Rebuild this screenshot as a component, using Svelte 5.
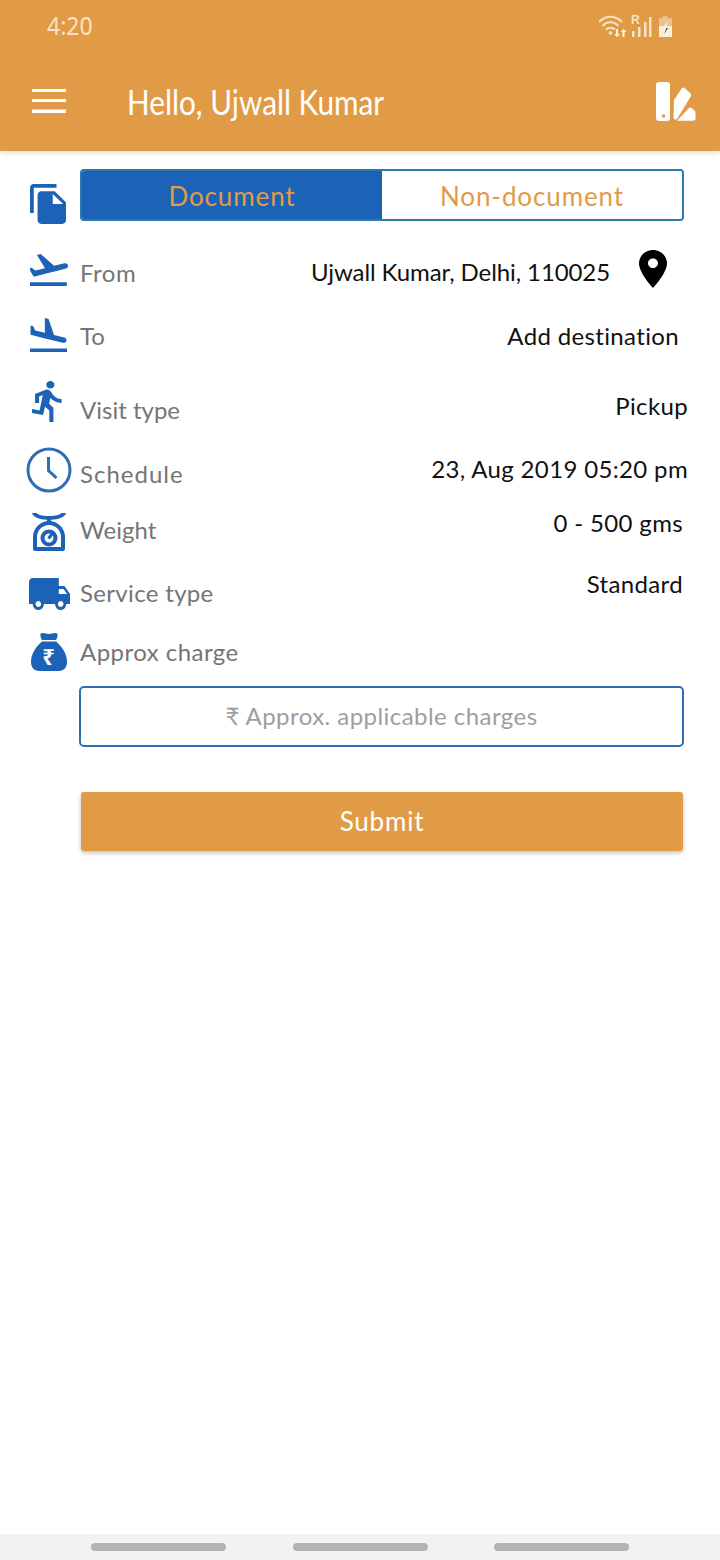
<script>
  const rows = [
    { key: 'from', label: 'From', value: 'Ujwall Kumar, Delhi, 110025' },
    { key: 'to', label: 'To', value: 'Add destination' },
    { key: 'visit', label: 'Visit type', value: 'Pickup' },
    { key: 'schedule', label: 'Schedule', value: '23, Aug 2019 05:20 pm' },
    { key: 'weight', label: 'Weight', value: '0 - 500 gms' },
    { key: 'service', label: 'Service type', value: 'Standard' },
    { key: 'charge', label: 'Approx charge', value: '' }
  ];
</script>

<div class="page">
  <header class="appbar">
    <div class="status">
      <span class="time">4:20</span>
      <svg class="sys" width="78" height="26" viewBox="0 0 78 26">
        <g fill="none" stroke="#f8e3c6" stroke-width="2">
          <path d="M1 8 C8 1 17 1 24 8" />
          <path d="M4.500 12 C9 7 16 7 20.500 12" />
          <path d="M8 15.500 C10.500 13 14.500 13 17 15.500" />
        </g>
        <circle cx="12.500" cy="19" r="1.800" fill="#f8e3c6" />
        <path d="M18 15h2v5h2l-3 3-3-3h2zM24.500 23v-5h-2l3-3 3 3h-2v5z" fill="#fdf3e3" />
        <text x="33" y="9.500" class="r">R</text>
        <path d="M34 17h2.500v6H34zM40 13h2.500v10H40zM46 8h2.500v15H46zM51 3h2.500v20H51z" fill="#f8e3c6" />
        <path d="M64.500 2h5v2h4.500v19H61V4h3.500z" fill="#ecc28c" />
        <path d="M61 12h13v11H61z" fill="#fbeeda" />
        <path d="M69.500 7l-4.500 6h2.500l-1.500 3h3l1.500-4h-2z" fill="#fbeeda" />
        <path d="M68.500 14l-2.500 6 4-6z" fill="#333" />
      </svg>
    </div>
    <div class="toolbar">
      <svg class="menu" width="34" height="24" viewBox="0 0 34 24">
        <path d="M0 0h34v3H0zM0 10h34v3H0zM0 20.500h34v3.500H0z" fill="#fff" />
      </svg>
      <h1>Hello, Ujwall Kumar</h1>
      <svg class="swatch" width="40" height="40" viewBox="0 0 40 40">
        <rect x="0" y="0" width="14" height="39" rx="3" fill="#fff" />
        <circle cx="7.500" cy="34" r="1.800" fill="#e19b47" />
        <path d="M17.500 36 L18 18 L26 6 Q27.300 5 28.500 6 L34.500 11.500 Q35.600 12.500 35 14 L21 37 Q18 38.500 17.500 36 Z" fill="#fff" />
        <path d="M21 38.700 L33 26 Q34 25 35.500 26 L38.500 28.500 Q39.500 29.500 39.500 31 L39.500 36 Q39.500 38.700 37 38.700 Z" fill="#fff" />
      </svg>
    </div>
  </header>

  <main class="form">
    <div class="typerow">
      <svg class="ico" width="36" height="40" viewBox="2 1 19 22" preserveAspectRatio="none">
        <path d="M16 1H4c-1.100 0-2 .9-2 2v14h2V3h12V1zm-1 4l6 6v10c0 1.100-.9 2-2 2H7.990C6.890 23 6 22.100 6 21l.01-14c0-1.100.89-2 1.990-2h7zm-1 7h5.500L14 6.500V12z" />
      </svg>
      <div class="toggle">
        <span class="seg on">Document</span>
        <span class="seg">Non-document</span>
      </div>
    </div>

    {#each rows as row}
      <div class="row {row.key}">
        <div class="iconcell">
          {#if row.key === 'from'}
            <svg width="38" height="33" viewBox="2.500 3 19.600 18" preserveAspectRatio="none"><path d="M2.500 19h19v2h-19zm19.570-9.360c-.21-.8-1.040-1.280-1.840-1.060L14.920 10l-6.900-6.430-1.930.51 4.140 7.170-4.970 1.330-1.970-1.540-1.450.39 1.820 3.160.77 1.330 1.600-.43 5.310-1.420 4.350-1.160L21 11.490c.81-.23 1.280-1.050 1.070-1.850z" /></svg>
          {:else if row.key === 'to'}
            <svg width="37" height="34" viewBox="2.500 2 19 19" preserveAspectRatio="none"><path d="M2.500 19h19v2h-19zm7.180-5.730l4.350 1.160 5.310 1.420c.8.21 1.620-.26 1.840-1.060.21-.8-.26-1.620-1.060-1.840l-5.310-1.420-2.760-9.020L10.120 2v8.280L5.150 8.950l-.93-2.320-1.450-.39v5.170l1.600.43 5.310 1.430z" /></svg>
          {:else if row.key === 'visit'}
            <svg width="30" height="41" viewBox="4.500 1.500 14.700 21.500" preserveAspectRatio="none"><path d="M13.490 5.480c1.100 0 2-.9 2-2s-.9-2-2-2-2 .9-2 2 .9 2 2 2zm-3.600 13.900l1-4.400 2.100 2v6h2v-7.500l-2.100-2 .6-3c1.300 1.500 3.300 2.500 5.500 2.500v-2c-1.900 0-3.500-1-4.300-2.400l-1-1.600c-.4-.6-1-1-1.700-1-.3 0-.5.1-.8.1l-5.200 2.200v4.700h2v-3.400l1.800-.7-1.600 8.100-4.900-1-.4 2 7 1.400z" /></svg>
          {:else if row.key === 'schedule'}
            <svg width="46" height="46" viewBox="0 0 46 46">
              <circle cx="23" cy="23" r="21" fill="#fff" stroke="#2f6db5" stroke-width="3" />
              <path d="M22.500 10v13.500l8 7.500" fill="none" stroke="#2f6db5" stroke-width="3" />
            </svg>
          {:else if row.key === 'weight'}
            <svg width="34" height="38" viewBox="0 0 34 38">
              <path d="M0 0h4.500c2 2 5 3 12.500 3s10.500-1 12.500-3H34c-1 4-7 6.500-15 6.700V10h-4V6.700C7 6.500 1 4 0 0z" />
              <path d="M3 36V24a14 14 0 0 1 28 0v12z" fill="#fff" stroke="#1c63b7" stroke-width="4" stroke-linejoin="round" />
              <circle cx="17" cy="25" r="6.500" fill="none" stroke="#1c63b7" stroke-width="4" />
              <path d="M16.500 25.500l5-6.500" fill="none" stroke="#1c63b7" stroke-width="3" />
            </svg>
          {:else if row.key === 'service'}
            <svg width="41" height="32" viewBox="1 4 22 16" preserveAspectRatio="none"><path d="M20 8h-3V4H3c-1.100 0-2 .9-2 2v11h2c0 1.660 1.340 3 3 3s3-1.340 3-3h6c0 1.660 1.340 3 3 3s3-1.340 3-3h2v-5l-3-4zM6 18.500c-.83 0-1.500-.67-1.500-1.500s.67-1.500 1.500-1.500 1.500.67 1.500 1.500-.67 1.500-1.500 1.500zm13.500-9l1.960 2.500H17V9.500h2.500zm-1.500 9c-.83 0-1.500-.67-1.500-1.500s.67-1.500 1.500-1.500 1.500.67 1.500 1.500-.67 1.500-1.500 1.500z" /></svg>
          {:else}
            <svg width="36" height="39" viewBox="0 0 36 39">
              <path d="M9.500 1.500c2-1 4-.5 5.500 0 2 .5 4 .5 6 0 1.500-.5 3.500-1 5.500 0 .5 2-.5 5-1.500 6.500H11C10 6.500 9 3.500 9.500 1.500z" />
              <path d="M11 9.500h14c6 5 11 12.500 11 20 0 6-3 9.500-8 9.500H8c-5 0-8-3.500-8-9.500 0-7.500 5-15 11-20z" />
              <text x="17.500" y="33" class="rupee">₹</text>
            </svg>
          {/if}
        </div>
        <span class="label">{row.label}</span>
        {#if row.value}<span class="value">{row.value}</span>{/if}
        {#if row.key === 'from'}
          <svg class="pin" width="28" height="38" viewBox="5 2 14 20" preserveAspectRatio="none"><path d="M12 2C8.130 2 5 5.130 5 9c0 5.250 7 13 7 13s7-7.750 7-13c0-3.870-3.130-7-7-7zm0 9.500c-1.380 0-2.500-1.120-2.500-2.500s1.120-2.500 2.500-2.500 2.500 1.120 2.500 2.500-1.120 2.500-2.500 2.500z" /></svg>
        {/if}
      </div>
    {/each}

    <div class="charge-input">₹ Approx. applicable charges</div>
    <button class="submit">Submit</button>
  </main>

  <footer class="nav">
    <span class="pill"></span>
    <span class="pill"></span>
    <span class="pill"></span>
  </footer>
</div>

<style>
  :global(body) {
    margin: 0;
    background: #fff;
  }
  .page {
    width: 720px;
    height: 1560px;
    display: flex;
    flex-direction: column;
    font-family: Lato, "Open Sans", sans-serif;
    overflow: hidden;
    background: #fff;
  }
  .appbar {
    height: 151px;
    flex: none;
    background: #e19b47;
    box-shadow: 0 2px 5px rgba(0, 0, 0, 0.14);
    position: relative;
    display: flex;
    flex-direction: column;
  }
  .status {
    height: 54px;
    display: flex;
    justify-content: space-between;
    padding: 11px 44px 0 47px;
    box-sizing: border-box;
  }
  .time {
    font-size: 25px;
    line-height: 28px;
    color: #f9e2c5;
    font-family: "Noto Sans", sans-serif;
    transform: scaleX(0.92);
    transform-origin: left;
  }
  .sys {
    margin-top: 3px;
  }
  .r {
    font: bold 12px "Liberation Sans", sans-serif;
    fill: #f8e3c6;
  }
  .toolbar {
    display: flex;
    align-items: center;
    padding-left: 32px;
    height: 97px;
  }
  .menu {
    margin-top: -4px;
  }
  h1 {
    margin: -2px 0 0 61px;
    font-size: 34px;
    line-height: 40px;
    font-weight: 400;
    color: #fff;
    font-family: Lato, sans-serif;
    transform: scaleX(0.875);
    transform-origin: left;
    white-space: nowrap;
  }
  .swatch {
    margin-left: auto;
    margin-right: 24px;
    margin-top: -2px;
  }
  .form {
    flex: 1;
    display: flex;
    flex-direction: column;
    padding-top: 18px;
  }
  .form svg {
    fill: #1c63b7;
  }
  .typerow {
    display: flex;
    height: 71px;
    padding-left: 30px;
  }
  .typerow .ico {
    margin-top: 15px;
    margin-right: 14px;
  }
  .toggle {
    width: 604px;
    height: 52px;
    box-sizing: border-box;
    border: 2px solid #2a7ab0;
    border-radius: 4px;
    display: flex;
    overflow: hidden;
  }
  .seg {
    flex: 1;
    display: flex;
    align-items: center;
    justify-content: center;
    padding-top: 2px;
    box-sizing: border-box;
    font-size: 26px;
    letter-spacing: 0.9px;
    color: #e19b47;
    background: #fff;
  }
  .seg.on {
    background: #1c63b7;
  }
  .row {
    display: flex;
    align-items: flex-start;
    position: relative;
  }
  .iconcell {
    width: 80px;
    flex: none;
    display: flex;
    box-sizing: border-box;
  }
  .label {
    font-size: 24px;
    line-height: 30px;
    color: #757575;
  }
  .value {
    margin-left: auto;
    font-size: 24px;
    line-height: 30px;
    letter-spacing: 0.35px;
    color: #111;
  }
  .rupee {
    font: bold 22px "Noto Sans", "DejaVu Sans", sans-serif;
    text-anchor: middle;
    fill: #fff;
  }
  .from { height: 65px; }
  .from .iconcell { margin-top: 13px; padding-left: 30px; }
  .from .label { margin-top: 18px; letter-spacing: 0.5px; }
  .from .value { margin-top: 17px; margin-right: 110px; letter-spacing: -0.1px; }
  .pin { position: absolute; left: 639px; top: 10px; }
  .form .pin { fill: #000; }

  .to { height: 65px; }
  .to .iconcell { margin-top: 13px; padding-left: 30px; }
  .to .label { margin-top: 16px; }
  .to .value { margin-top: 16px; margin-right: 41px; }

  .visit { height: 70px; }
  .visit .iconcell { margin-top: 11px; padding-left: 32px; }
  .visit .label { margin-top: 25px; }
  .visit .value { margin-top: 21px; margin-right: 32px; }

  .schedule { height: 60px; }
  .schedule .iconcell { margin-top: 7px; padding-left: 26px; }
  .schedule .label { margin-top: 19px; letter-spacing: 1px; }
  .schedule .value { margin-top: 14px; margin-right: 32px; }

  .weight { height: 60px; }
  .weight .iconcell { margin-top: 13px; padding-left: 32px; }
  .weight .label { margin-top: 15px; }
  .weight .value { margin-top: 8px; margin-right: 37px; }

  .service { height: 65px; }
  .service .iconcell { margin-top: 18px; padding-left: 29px; }
  .service .label { margin-top: 18px; letter-spacing: 0.33px; }
  .service .value { margin-top: 9px; margin-right: 37px; }

  .charge { height: 61px; }
  .charge .iconcell { margin-top: 7px; padding-left: 31px; }
  .charge .label { margin-top: 12px; letter-spacing: 0.46px; }

  .charge-input {
    margin-left: 79px;
    width: 605px;
    height: 61px;
    box-sizing: border-box;
    border: 2px solid #2f6db5;
    border-radius: 5px;
    display: flex;
    align-items: center;
    justify-content: center;
    padding-bottom: 3px;
    font-size: 24px;
    letter-spacing: 0.45px;
    color: #9e9e9e;
  }
  .submit {
    margin: 45px 0 0 81px;
    width: 602px;
    height: 59px;
    border: 0;
    border-radius: 3px;
    background: #e19b47;
    color: #fff;
    font-family: inherit;
    font-size: 26px;
    letter-spacing: 0.8px;
    box-shadow: 0 2px 4px rgba(0, 0, 0, 0.25);
    padding: 0 0 2px;
  }
  .nav {
    height: 26px;
    flex: none;
    background: #f2f2f2;
    position: relative;
    display: flex;
    gap: 66.5px;
    padding: 9px 0 0 91px;
    box-sizing: border-box;
  }
  .pill {
    width: 135px;
    height: 8px;
    border-radius: 4px;
    background: #b3b3b3;
  }
</style>
